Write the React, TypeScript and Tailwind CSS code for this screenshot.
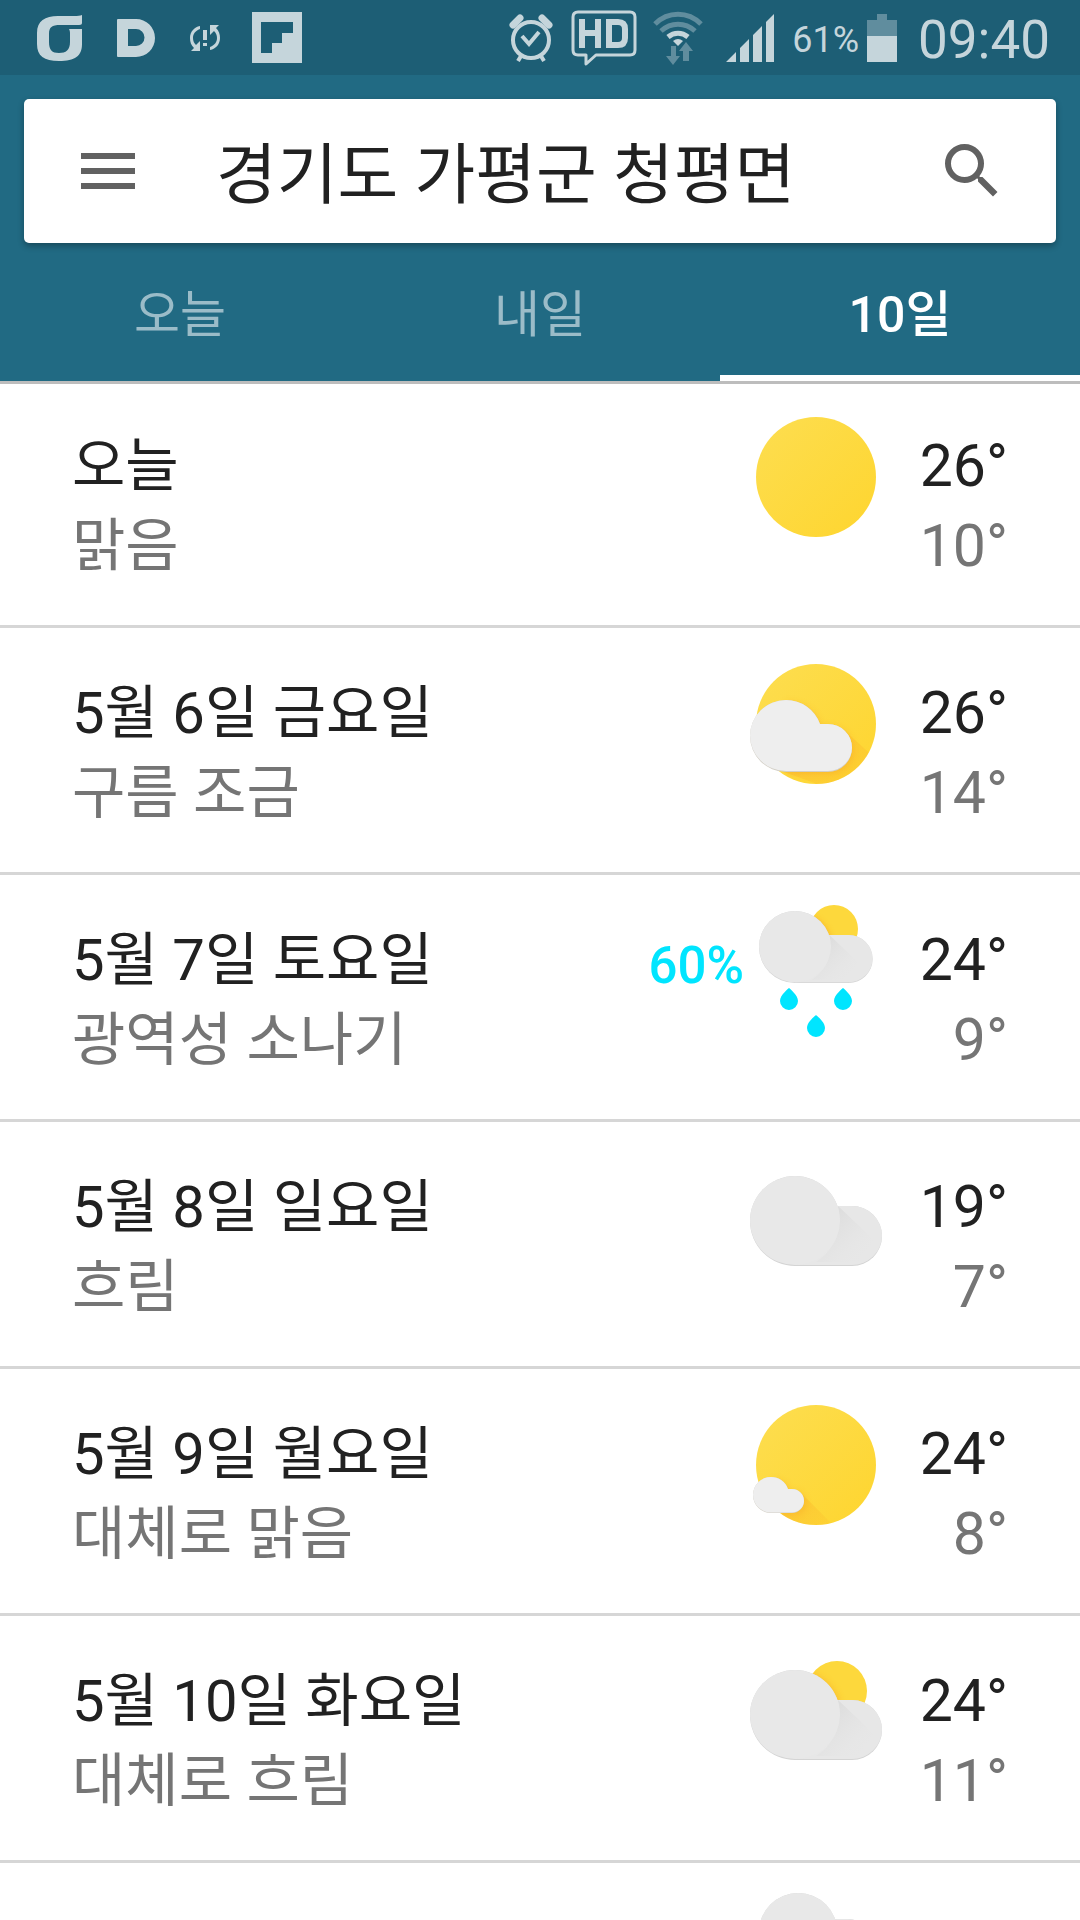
import React, { useState } from 'react';
import { MdMenu, MdSearch } from 'react-icons/md';

type Condition = 'sunny' | 'partlyCloudy' | 'showers' | 'cloudy' | 'mostlySunny' | 'mostlyCloudy' | 'rain';

interface DayForecast {
  id: string;
  day: string;
  summary: string;
  condition: Condition;
  high: number;
  low: number;
  rain?: number;
}

const tabs = ['오늘', '내일', '10일'];

const forecast: DayForecast[] = [
  { id: '0505', day: '오늘', summary: '맑음', condition: 'sunny', high: 26, low: 10 },
  { id: '0506', day: '5월 6일 금요일', summary: '구름 조금', condition: 'partlyCloudy', high: 26, low: 14 },
  { id: '0507', day: '5월 7일 토요일', summary: '광역성 소나기', condition: 'showers', high: 24, low: 9, rain: 60 },
  { id: '0508', day: '5월 8일 일요일', summary: '흐림', condition: 'cloudy', high: 19, low: 7 },
  { id: '0509', day: '5월 9일 월요일', summary: '대체로 맑음', condition: 'mostlySunny', high: 24, low: 8 },
  { id: '0510', day: '5월 10일 화요일', summary: '대체로 흐림', condition: 'mostlyCloudy', high: 24, low: 11 },
];

const Gradients = () => (
  <svg className="absolute h-0 w-0" aria-hidden="true">
    <defs>
      <linearGradient id="sun" x1="0" y1="0" x2="1" y2="1">
        <stop offset="0.1" stopColor="#fddd4d" />
        <stop offset="0.9" stopColor="#fed632" />
      </linearGradient>
      <linearGradient id="sunShade" x1="0" y1="0" x2="1" y2="1">
        <stop offset="0.3" stopColor="#f9a825" stopOpacity="0.3" />
        <stop offset="1" stopColor="#f9a825" stopOpacity="0.05" />
      </linearGradient>
      <linearGradient id="cloudShade" x1="0" y1="0" x2="1" y2="1">
        <stop offset="0.2" stopColor="#dcdcdc" />
        <stop offset="0.7" stopColor="#e5e5e5" stopOpacity="0.4" />
        <stop offset="1" stopColor="#e8e8e8" stopOpacity="0" />
      </linearGradient>
      <filter id="soft" x="-20%" y="-20%" width="140%" height="140%">
        <feGaussianBlur stdDeviation="3" />
      </filter>
      <clipPath id="sunClip">
        <circle cx="66" cy="66" r="60" />
      </clipPath>
      <clipPath id="smallSunClip">
        <circle cx="87" cy="45" r="30" />
      </clipPath>
    </defs>
  </svg>
);

const SmallCloud = () => (
  <>
    <path d="M36 42a36 36 0 0 1 34 24h8a24 24 0 0 1 0 48H36a36 36 0 0 1 0-72z" fill="#d3cfc6" />
    <path d="M36 42a36 35.500 0 0 1 34 24h8a24 23.500 0 0 1 0 47H36a36 35.500 0 0 1 0-71z" fill="#eeeeee" />
  </>
);

// lobe is the centre of the small round end on the right
const BigCloud = ({ lobe = 102 }: { lobe?: number }) => (
  <>
    <circle cx="45" cy="45" r="45" fill="#d4d4d4" />
    <path d={`M60 30H${lobe}a30 30 0 0 1 0 60H45z`} fill="#d4d4d4" />
    <path d={`M60 30H${lobe}a30 29.500 0 0 1 0 59H45z`} fill="#e7e7e7" />
    <path d="M88 30l36 34-16 22H66c16-10 26-28 22-56z" fill="url(#cloudShade)" />
    <ellipse cx="45" cy="44.500" rx="45" ry="44.500" fill="#e8e8e8" />
  </>
);

const WeatherIcon = ({ condition }: { condition: Condition }) => (
  <svg viewBox="0 0 132 144" className="h-36 w-[132px] shrink-0" role="img" aria-label={condition}>
    {condition === 'sunny' && <circle cx="66" cy="66" r="60" fill="url(#sun)" />}
    {condition === 'partlyCloudy' && (
      <>
        <circle cx="66" cy="66" r="60" fill="url(#sun)" />
        <g clipPath="url(#sunClip)">
          <path d="M94 72l42 38-30 30-72-26z" fill="url(#sunShade)" />
          <path
            d="M36 42a36 36 0 0 1 34 24h8a24 24 0 0 1 0 48H36z"
            fill="#f9a825"
            opacity=".5"
            filter="url(#soft)"
            transform="translate(1 2)"
          />
        </g>
        <SmallCloud />
      </>
    )}
    {condition === 'mostlySunny' && (
      <>
        <circle cx="66" cy="66" r="60" fill="url(#sun)" />
        <g clipPath="url(#sunClip)">
          <path d="M50 93l34 34-30 10-22-22z" fill="url(#sunShade)" />
          <path
            d="M21 78a18 18 0 0 1 17 12h4a12 12 0 0 1 0 24H21z"
            fill="#f9a825"
            opacity=".4"
            filter="url(#soft)"
            transform="translate(2 2)"
          />
        </g>
        <g transform="translate(3 57) scale(.5)">
          <SmallCloud />
        </g>
      </>
    )}
    {condition === 'cloudy' && (
      <g transform="translate(0 24)">
        <BigCloud />
      </g>
    )}
    {condition === 'mostlyCloudy' && (
      <>
        <circle cx="87" cy="45" r="30" fill="#fdd83c" />
        <g clipPath="url(#smallSunClip)">
          <circle cx="46" cy="70" r="46" fill="#f9a825" opacity=".5" filter="url(#soft)" />
        </g>
        <g transform="translate(0 24)">
          <BigCloud />
        </g>
      </>
    )}
    {condition === 'showers' && (
      <>
        <g transform="translate(14.400 -12) scale(.8)">
          <circle cx="87" cy="45" r="30" fill="#fdd83c" />
          <g clipPath="url(#smallSunClip)">
            <circle cx="40" cy="69" r="46" fill="#f9a825" opacity=".5" filter="url(#soft)" />
          </g>
        </g>
        <g transform="translate(9 6) scale(.8)">
          <BigCloud lobe={112} />
        </g>
      </>
    )}
    {condition === 'rain' && (
      <g transform="translate(9 0) scale(.87)">
        <BigCloud />
      </g>
    )}
    {(condition === 'showers' || condition === 'rain') &&
      [[39, 83], [93, 83], [66, 110]].map(([x, y]) => (
        <path
          key={`${x}-${y}`}
          d="M0 0c1 1 9 7 9 13a9 9 0 0 1-18 0c0-6 8-12 9-13z"
          fill="#00e5ff"
          transform={`translate(${x} ${y})`}
        />
      ))}
  </svg>
);

const StatusBar = () => (
  <div className="flex h-[75px] items-center justify-between bg-[#1d5e75] pr-[30px] pl-[36px] text-[#c5d5db]">
    <div className="flex items-center">
      <svg viewBox="0 0 46 48" className="h-12 w-[46px]" fill="currentColor" aria-hidden="true">
        <path
          fillRule="evenodd"
          d="M46 1v8c0 2-2 2-5 2H24c-8 0-11 2-11 9v8c0 8 3 11 10 11s11-3 11-11V19c0-2-.5-3-1-4h13v15c0 12-7 17-23 17C8 47 1 42 1 30V19C1 7 9 2 22 2h16c4 0 6-.3 8-1z"
        />
      </svg>
      <svg viewBox="0 0 38 38" className="ml-[35px] h-[38px] w-[38px]" fill="currentColor" aria-hidden="true">
        <path fillRule="evenodd" d="M1 0h18a19 19 0 0 1 0 38H1a1 1 0 0 1-1-1V1a1 1 0 0 1 1-1zm10 10v17h8a8.500 8.500 0 0 0 0-17z" />
      </svg>
      <svg viewBox="0 0 30 26" className="ml-[35px] h-[26px] w-[30px]" fill="currentColor" aria-hidden="true">
        <path d="M10 1v3C5 6 3 9 3 13c0 3 1 5 3 7l4-4v10H1l3-3C1 20 0 17 0 13 0 7 4 2 10 1zM20 25v-3c5-2 7-5 7-9 0-3-1-5-3-7l-4 4V0h9l-3 3c3 3 4 6 4 10 0 6-4 11-10 12zM13 5h4v10h-4zM13 18h4v3h-4z" />
      </svg>
      <svg viewBox="0 0 50 51" className="ml-8 h-[51px] w-[50px]" fill="currentColor" aria-hidden="true">
        <path fillRule="evenodd" d="M0 0h50v51H0zM9 10v31h11V31h10V21h11V10z" />
      </svg>
    </div>

    <div className="flex items-center">
      {/* Alarm */}
      <svg viewBox="0 0 44 48" className="h-12 w-11" fill="none" stroke="currentColor" aria-hidden="true">
        <circle cx="22" cy="26" r="18" strokeWidth="4" />
        <path d="M4 11l7-7M40 11l-7-7" strokeWidth="7" strokeLinecap="round" />
        <path d="M12 42l-3 5M32 42l3 5" strokeWidth="4" />
        <path d="M13 22l7 8 10-12" strokeWidth="4" />
      </svg>
      <svg viewBox="0 0 66 56" className="ml-[18px] h-14 w-[66px]" fill="none" stroke="currentColor" aria-hidden="true">
        <path d="M7 2h52q5 0 5 5v33q0 5-5 5H25L15 54v-9H7q-5 0-5-5V7q0-5 5-5z" strokeWidth="3" strokeLinejoin="round" />
        <path d="M11 9v29M27 9v29M11 23h16" strokeWidth="6" />
        <path d="M38 12v23h9q7 0 7-7v-9q0-7-7-7z" strokeWidth="6" />
      </svg>
      <svg viewBox="0 0 50 54" className="ml-4 h-[54px] w-[50px]" fill="none" stroke="currentColor" aria-hidden="true">
        <path d="M2 13c13-13 33-13 46 0M8 20c10-9 24-9 34 0" strokeWidth="5" opacity=".4" />
        <path d="M15 26c6-5 14-5 20 0" strokeWidth="5" />
        <path d="M20 30q5-4 10 0l-5 5z" fill="currentColor" stroke="none" />
        <path d="M18 35h5v10h4l-7 9-7-9h5zM30 50h6V40h4l-7-9-7 9h4z" fill="currentColor" stroke="none" opacity=".4" />
      </svg>
      <svg viewBox="0 0 48 48" className="ml-[23px] h-12 w-12" fill="currentColor" aria-hidden="true">
        <path d="M0 48l10-10v10zM14 34l9-9v23h-9zM27 21l9-9v36h-9zM40 8l8-8v48h-8z" />
      </svg>
      <span className="ml-[18px] pt-1 text-[36px] leading-[44px]">61%</span>
      <svg viewBox="0 0 30 48" className="ml-2 h-12 w-[30px]" fill="currentColor" aria-hidden="true">
        <path d="M0 6h10V0h10v6h10v16H0z" opacity=".4" />
        <path d="M0 22h30v26H0z" />
      </svg>
      <span className="ml-[21px] pt-1 text-[53px] leading-[64px]">09:40</span>
    </div>
  </div>
);

const ForecastRow = ({ item }: { item: DayForecast }) => (
  <li className="flex h-[247px] items-start border-b-[3px] border-[#d6d6d6] px-[72px] pt-[30px] text-[58px] leading-[80px]">
    <div className="flex-1 pt-[15px]">
      <h2 className="text-[#212121]">{item.day}</h2>
      <p className="text-[#757575]">{item.summary}</p>
    </div>
    {item.rain && <span className="mt-[21px] mr-[6px] text-[51px] font-medium text-[#00e5ff]">{item.rain}%</span>}
    <WeatherIcon condition={item.condition} />
    <div className="w-[126px] pt-[15px] text-right text-[59px] leading-[80px]">
      <p className="text-[#212121]">{item.high}°</p>
      <p className="text-[#757575]">{item.low}°</p>
    </div>
  </li>
);

const App: React.FC = () => {
  const [activeTab, setActiveTab] = useState('10일');

  return (
    <div className="h-screen overflow-hidden bg-white font-['Roboto','Noto_Sans_CJK_KR',sans-serif]">
      <Gradients />
      <StatusBar />

      {/* Header */}
      <header className="relative bg-[#216a83] pt-6 shadow-[0_3px_0_#bdbdbd]">
        <div className="mx-6 flex h-36 items-center rounded-[5px] bg-white px-12 shadow-[0_3px_6px_rgba(0,0,0,0.3)]">
          <button aria-label="메뉴" className="text-[#616161]">
            <MdMenu className="h-[72px] w-[72px]" />
          </button>
          <h1 className="ml-[72px] flex-1 pt-[10px] text-[66px] leading-[80px] text-[#212121]">경기도 가평군 청평면</h1>
          <button aria-label="검색" className="text-[#616161]">
            <MdSearch className="h-[72px] w-[72px]" />
          </button>
        </div>

        <nav className="flex h-[138px]">
          {tabs.map((tab) => (
            <button
              key={tab}
              onClick={() => setActiveTab(tab)}
              className={`flex-1 border-b-[6px] pt-3 text-[50px] leading-[60px] ${
                activeTab === tab ? 'border-white font-medium text-white' : 'border-transparent text-[#9bbcc8]'
              }`}
            >
              {tab}
            </button>
          ))}
        </nav>
      </header>

      {/* Daily forecast */}
      <ul>
        {forecast.map((item) => (
          <ForecastRow key={item.id} item={item} />
        ))}
        <li className="flex items-start justify-end pt-[30px] pr-[198px]">
          <WeatherIcon condition="rain" />
        </li>
      </ul>
    </div>
  );
};

export default App;
